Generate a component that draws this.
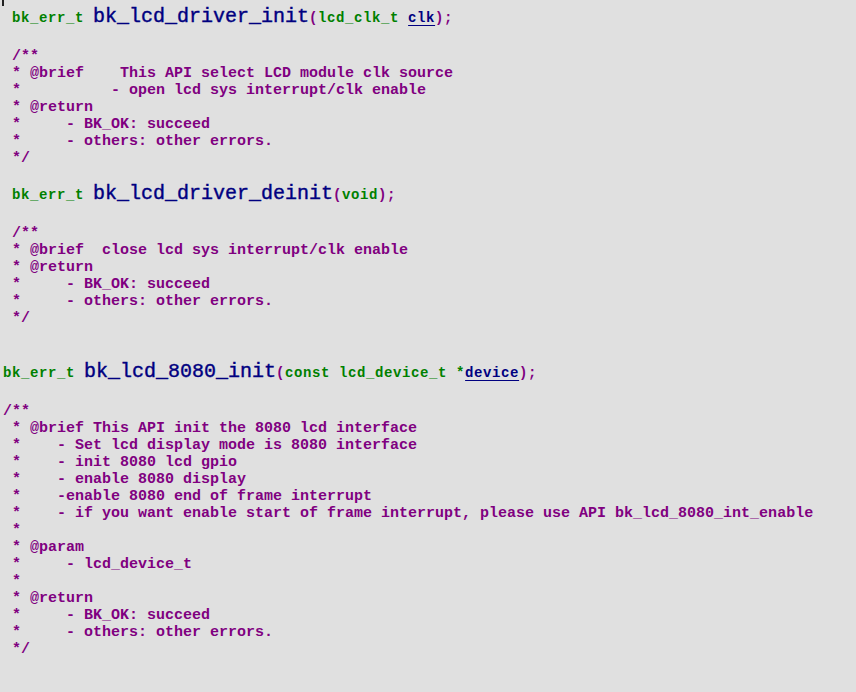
import React from "react";

// small monospace pieces used in the prototype lines
const Ty = ({ children }) => (
  <span className="text-[14px] font-bold tracking-[0.6px] text-[#008000]">{children}</span>
);
const Pn = ({ children }) => (
  <span className="text-[14px] font-bold tracking-[0.6px] text-[#800080]">{children}</span>
);
const Arg = ({ children }) => (
  <span className="text-[14px] font-bold tracking-[0.6px] text-[#000080] underline decoration-[#000080] underline-offset-[3px]">
    {children}
  </span>
);
const Fn = ({ children }) => (
  <span className="text-[20px] text-[#000080] [-webkit-text-stroke:0.4px_#000080]">{children}</span>
);

const Signature = ({ name, children }) => (
  <div className="h-[26px] leading-[26px] whitespace-pre">
    <Ty>bk_err_t </Ty>
    <Fn>{name}</Fn>
    <Pn>(</Pn>
    {children}
    <Pn>);</Pn>
  </div>
);

const Comment = ({ lines, className = "" }) => (
  <pre className={"font-['Liberation_Mono',monospace] text-[15px] leading-[17px] font-bold text-[#800080] " + className}>
    {lines.join("\n")}
  </pre>
);

const block1 = [
  "/**",
  "* @brief    This API select LCD module clk source",
  "*          - open lcd sys interrupt/clk enable",
  "* @return",
  "*     - BK_OK: succeed",
  "*     - others: other errors.",
  "*/",
];

const block2 = [
  "/**",
  "* @brief  close lcd sys interrupt/clk enable",
  "* @return",
  "*     - BK_OK: succeed",
  "*     - others: other errors.",
  "*/",
];

const block3 = [
  "/**",
  " * @brief This API init the 8080 lcd interface",
  " *    - Set lcd display mode is 8080 interface",
  " *    - init 8080 lcd gpio",
  " *    - enable 8080 display",
  " *    -enable 8080 end of frame interrupt",
  " *    - if you want enable start of frame interrupt, please use API bk_lcd_8080_int_enable",
  " *",
  " * @param",
  " *     - lcd_device_t",
  " *",
  " * @return",
  " *     - BK_OK: succeed",
  " *     - others: other errors.",
  " */",
];

export default function App() {
  return (
    <div className="relative min-h-screen bg-[#e0e0e0] font-['Liberation_Mono',monospace]">
      {/* caret leftover in the corner */}
      <div className="absolute left-[2px] top-0 h-[6px] w-[2px] bg-[#222]" />

      <div className="pl-[12px] pt-[4px]">
        <Signature name="bk_lcd_driver_init">
          <Ty>lcd_clk_t </Ty>
          <Arg>clk</Arg>
        </Signature>
        <Comment lines={block1} className="mt-[18px]" />
      </div>

      <div className="pl-[12px] mt-[14px]">
        <Signature name="bk_lcd_driver_deinit">
          <Ty>void</Ty>
        </Signature>
        <Comment lines={block2} className="mt-[18px]" />
      </div>

      <div className="pl-[3px] mt-[32px]">
        <Signature name="bk_lcd_8080_init">
          <Ty>const lcd_device_t *</Ty>
          <Arg>device</Arg>
        </Signature>
        <Comment lines={block3} className="mt-[18px]" />
      </div>
    </div>
  );
}
